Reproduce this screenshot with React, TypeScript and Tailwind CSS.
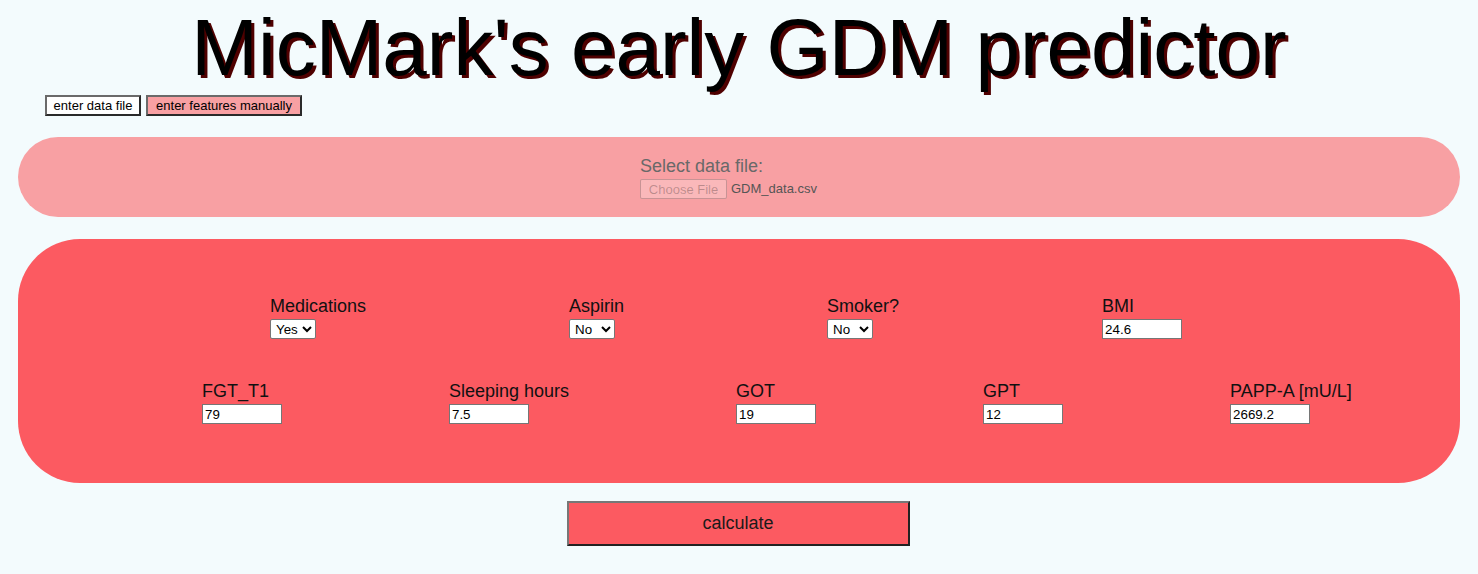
import React, { useState } from 'react';

const font = "font-['Liberation_Sans',Arial,sans-serif]";

const SelectField: React.FC<{ label: string; value: string; options: string[]; w: string }> = ({ label, value, options, w }) => {
  const [val, setVal] = useState(value);
  return (
    <div className="flex flex-col items-start">
      <label className="text-[18px] leading-[21px] text-[#111]">{label}</label>
      <select
        value={val}
        onChange={e => setVal(e.target.value)}
        className={`${w} h-[20px] mt-[2px] bg-white border border-[#767676] rounded-[2px] text-[13.33px] text-black pl-[1px]`}
      >
        {options.map(o => <option key={o}>{o}</option>)}
      </select>
    </div>
  );
};

const TextField: React.FC<{ label: string; value: string }> = ({ label, value }) => {
  const [val, setVal] = useState(value);
  return (
    <div className="flex flex-col items-start">
      <label className="text-[18px] leading-[21px] text-[#111] whitespace-nowrap">{label}</label>
      <input
        value={val}
        onChange={e => setVal(e.target.value)}
        className="w-[80px] h-[20px] mt-[2px] bg-white border border-[#767676] px-[2px] text-[13.33px] text-black outline-none"
      />
    </div>
  );
};

const App: React.FC = () => {
  const [mode, setMode] = useState<'file' | 'manual'>('manual');

  return (
    <div className={`min-h-screen bg-[#f3fbfd] ${font} pb-[28px]`}>
      <h1 className="text-center text-[80px] leading-[90px] pt-[3px] text-black [text-shadow:3px_3px_0_#4f0000]">
        MicMark's early GDM predictor
      </h1>

      <div className="flex gap-[5px] pl-[45px] mt-[2px]">
        <button
          onClick={() => setMode('file')}
          className="w-[96px] h-[21px] text-[13px] leading-none bg-white text-black border-2 border-[#6a6a6a] border-r-[#2a2a2a] border-b-[#2a2a2a]"
        >
          enter data file
        </button>
        <button
          onClick={() => setMode('manual')}
          className="w-[156px] h-[21px] text-[13px] leading-none bg-[#f8a0a3] text-black border-2 border-[#6a6a6a] border-r-[#2a2a2a] border-b-[#2a2a2a]"
        >
          enter features manually
        </button>
      </div>

      <div className="mx-[18px] mt-[21px] h-[80px] rounded-[40px] bg-[#f8a0a3] flex justify-center">
        <div className="w-[198px] pt-[19px]">
          <div className="text-[18px] leading-[21px] text-[#696969]">Select data file:</div>
          <div className="flex items-center gap-[4px] mt-[2px]">
            <button disabled className="h-[20px] w-[87px] text-[13px] bg-white/25 text-black/25 border border-black/20 rounded-[2px]">
              Choose File
            </button>
            <span className="text-[13px] text-[#555]">GDM_data.csv</span>
          </div>
        </div>
      </div>

      <div className="mx-[18px] mt-[22px] h-[244px] rounded-[62px] bg-[#fc5a61] pt-[57px]">
        <div className="flex items-start gap-[203px] pl-[252px]">
          <SelectField label="Medications" value="Yes" options={['Yes', 'No']} w="w-[46px]" />
          <SelectField label="Aspirin" value="No" options={['Yes', 'No']} w="w-[46px]" />
          <SelectField label="Smoker?" value="No" options={['Yes', 'No']} w="w-[46px]" />
          <TextField label="BMI" value="24.6" />
        </div>
        <div className="flex items-start gap-[167px] pl-[184px] mt-[42px]">
          <TextField label="FGT_T1" value="79" />
          <TextField label="Sleeping hours" value="7.5" />
          <TextField label="GOT" value="19" />
          <TextField label="GPT" value="12" />
          <TextField label="PAPP-A [mU/L]" value="2669.2" />
        </div>
      </div>

      <div className="flex justify-center mt-[18px] pr-[2px]">
        <button className="w-[343px] h-[45px] bg-[#fc5a61] text-[18px] text-[#1a1a1a] border-2 border-[#777] border-r-[#222] border-b-[#222]">
          calculate
        </button>
      </div>
    </div>
  );
};

export default App;
